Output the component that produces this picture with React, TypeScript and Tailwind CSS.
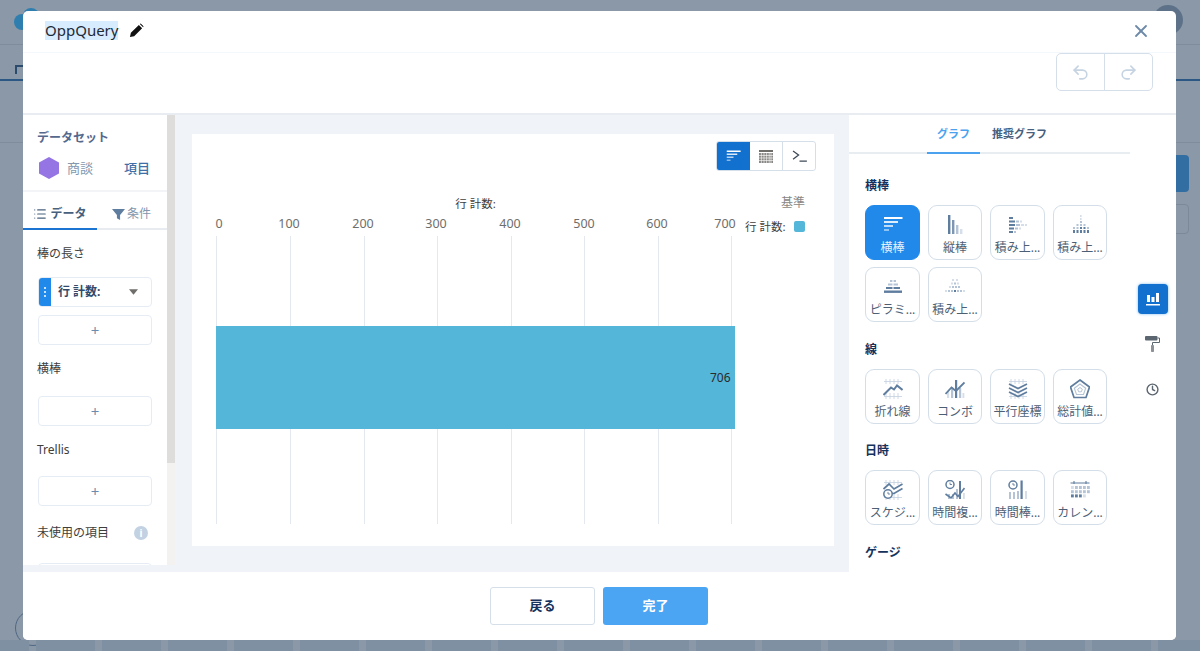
import React from 'react';
import { X, Undo2, Redo2, List, Clock } from 'lucide-react';

const SLATE = '#5f7d9e';
const LIGHT = '#b4c4d6';
const PALE = '#d5dee9';

const Dots = ({ rows }: { rows: [number, number, number, number, string][] }) => (
  <>
    {rows.map(([x, y, w, h, fill], i) => (
      <rect key={i} x={x} y={y} width={w} height={h} fill={fill} />
    ))}
  </>
);

const GridBg = () => (
  <path d="M3 0v5M7 0v5M11 0v5M15 0v5M1 2.5h18M3 14v6M7 14v6M11 14v6M15 14v6M1 17.5h18" stroke="#c3d0df" strokeWidth="0.8" fill="none" />
);

const ClockMark = ({ cx, cy, r }: { cx: number; cy: number; r: number }) => (
  <g>
    <circle cx={cx} cy={cy} r={r} fill="#fff" stroke={SLATE} strokeWidth="1.5" />
    <path d={`M${cx} ${cy - r * 0.5}V${cy}H${cx + r * 0.5}`} stroke={SLATE} strokeWidth="0.9" fill="none" />
  </g>
);

const HBarIcon = ({ color }: { color: string }) => (
  <>
    <rect x="1" y="2" width="18.5" height="2" fill={color} />
    <rect x="1" y="6" width="14" height="2" fill={color} opacity="0.85" />
    <rect x="1" y="10" width="9" height="2" fill={color} opacity="0.7" />
    <rect x="1" y="14" width="5" height="2" fill={color} opacity="0.5" />
  </>
);

const icons: Record<string, React.ReactNode> = {
  vbar: (
    <Dots rows={[[3, 0, 2.4, 19, SLATE], [7, 5, 2.4, 14, '#7d97b3'], [11, 10, 2.4, 9, LIGHT], [15, 14, 2.4, 5, PALE]]} />
  ),
  stackh: (
    <Dots
      rows={[
        [1, 2, 4, 2, SLATE], [1, 5.5, 6, 2, SLATE], [8, 5.5, 3, 2, LIGHT], [12, 5.5, 2, 2, PALE],
        [1, 9, 6, 2, SLATE], [8, 9, 4, 2, LIGHT], [13, 9, 3, 2, PALE], [17, 9, 2, 2, PALE],
        [1, 12.5, 5, 2, SLATE], [7, 12.5, 3, 2, LIGHT], [11, 12.5, 2, 2, PALE], [1, 16, 4, 2, SLATE], [6, 16, 2, 2, LIGHT],
      ]}
    />
  ),
  stackv: (
    <Dots
      rows={[
        [10, 0, 1.6, 2, PALE], [10, 3, 1.6, 2, PALE], [10, 6, 2, 2, LIGHT], [10, 9, 2, 2, LIGHT], [10, 12, 2, 2, SLATE], [10, 15, 2, 3, SLATE],
        [6.5, 9, 2, 2, LIGHT], [6.5, 12, 2, 2, LIGHT], [6.5, 15, 2, 3, SLATE], [3, 15, 2, 3, SLATE], [3, 12, 2, 2, LIGHT],
        [13.5, 9, 2, 2, LIGHT], [13.5, 12, 2, 2, SLATE], [13.5, 15, 2, 3, SLATE], [17, 12, 2, 2, LIGHT], [17, 15, 2, 3, SLATE],
      ]}
    />
  ),
  pyramid: (
    <Dots
      rows={[
        [7, 3, 2.4, 2, LIGHT], [10.6, 3, 2.4, 2, LIGHT], [5, 6.5, 4.5, 2, LIGHT], [10.5, 6.5, 4.5, 2, LIGHT],
        [3, 10, 6.5, 2, SLATE], [10.5, 10, 6.5, 2, SLATE], [1, 13.5, 18, 2.4, SLATE],
      ]}
    />
  ),
  stackp: (
    <Dots
      rows={[
        [7, 2, 2, 2, PALE], [11, 2, 2, 2, PALE],
        [6, 5.5, 2, 2, PALE], [9, 5.5, 2, 2, LIGHT], [12, 5.5, 2, 2, PALE],
        [4, 9, 2, 2, PALE], [7, 9, 2, 2, LIGHT], [10, 9, 2, 2, LIGHT], [13, 9, 2, 2, LIGHT],
        [0, 13, 2, 2, PALE], [3, 13, 2, 2, LIGHT], [6, 13, 2, 2, LIGHT], [9, 13, 2, 2, SLATE], [12, 13, 2, 2, LIGHT], [15, 13, 2, 2, LIGHT], [18, 13, 2, 2, PALE],
      ]}
    />
  ),
  line: (
    <>
      <GridBg />
      <path d="M0.5 16L8 8.5L11 10.5L14 6.5L19.5 11" stroke={SLATE} strokeWidth="2" fill="none" />
    </>
  ),
  combo: (
    <>
      <Dots rows={[[2, 12, 2.2, 7, PALE], [6, 8, 2.2, 11, LIGHT], [10, 1, 2.2, 18, SLATE], [14, 9, 2.2, 10, LIGHT], [17.5, 14, 1.8, 5, PALE]]} />
      <path d="M0.5 15L6.5 8.5L11 12L19.5 3.5" stroke={SLATE} strokeWidth="1.8" fill="none" />
    </>
  ),
  parallel: (
    <>
      <GridBg />
      <path d="M1 5L10 9.5L19 5M1 9L10 13.5L19 9M1 13L10 17.5L19 13" stroke={SLATE} strokeWidth="1.7" fill="none" />
    </>
  ),
  radar: (
    <>
      <path d="M10 1L19.5 8L16 18.5H4L0.5 8Z" fill="none" stroke={SLATE} strokeWidth="1.7" />
      <path d="M10 5L15.7 9.2L13.5 15.5H6.5L4.3 9.2Z" fill="none" stroke={LIGHT} strokeWidth="1.1" />
      <path d="M10 8.5L12.3 10.2L11.4 12.8H8.6L7.7 10.2Z" fill="none" stroke={LIGHT} strokeWidth="1" />
    </>
  ),
  schedule: (
    <>
      <GridBg />
      <path d="M0.5 9L6 4L11 9L19.5 4M5 13L11 13.5L19.5 8.5" stroke={SLATE} strokeWidth="1.7" fill="none" />
      <ClockMark cx={5} cy={14} r={4.2} />
    </>
  ),
  timecombo: (
    <>
      <Dots rows={[[3, 14, 2, 5, LIGHT], [7, 14, 2, 5, LIGHT], [11, 9, 2, 10, LIGHT], [14, 1, 2, 18, SLATE], [18, 13, 1.8, 6, PALE]]} />
      <path d="M0.5 14L6 18L10 13L13 16.5L19.5 8" stroke={SLATE} strokeWidth="1.6" fill="none" />
      <ClockMark cx={5} cy={4.5} r={4} />
    </>
  ),
  timebar: (
    <>
      <Dots rows={[[1, 12, 2, 7, LIGHT], [5, 12, 2, 7, LIGHT], [9, 11, 2, 8, LIGHT], [12.5, 0.5, 2.2, 18.5, SLATE], [17, 11, 2, 8, PALE]]} />
      <ClockMark cx={5} cy={5} r={4} />
    </>
  ),
  calendar: (
    <>
      <path d="M0.5 3h19M4 1v3M16 1v3" stroke={SLATE} strokeWidth="1.1" fill="none" />
      {[6, 10.2, 14.4].flatMap((y, r) =>
        [1, 5, 9, 13, 17].map((x, c) => (
          <rect
            key={`${r}-${c}`}
            x={x}
            y={y}
            width="2.8"
            height="3"
            fill={r === 2 && c < 3 ? SLATE : r === 2 && c === 3 ? PALE : r === 2 ? '#ffffff' : r === 0 && c === 0 ? PALE : LIGHT}
          />
        ))
      )}
    </>
  ),
};

type Tile = { label: string; icon: string };

const Section = ({ title, mt, tiles }: { title: string; mt: string; tiles: Tile[] }) => (
  <section className={mt}>
    <h3 className="text-[12px] leading-[16px] font-bold text-[#16325c]">{title}</h3>
    <div className="mt-[11px] grid grid-cols-[55px_54px_55px_54px] gap-x-[8px] gap-y-[7px]">
      {tiles.map((t, i) => (
        <ChartTile key={i} label={t.label} icon={t.icon} />
      ))}
    </div>
  </section>
);

const ChartTile = ({ label, icon }: Tile) => {
  const active = icon === 'hbar';
  return (
    <div
      className={`h-[55px] rounded-[9px] border-[1.5px] flex flex-col items-center pt-[9px] ${
        active ? 'bg-[#2189ea] border-[#2189ea] text-[#e6f2fd]' : 'bg-white border-[#d3dee9] text-[#4d5f75]'
      }`}
    >
      <svg viewBox="0 0 20 20" className="w-[20px] h-[20px]">
        {active ? <HBarIcon color="#ffffff" /> : icons[icon]}
      </svg>
      <span className="mt-[5px] text-[12px] leading-[15px] whitespace-nowrap">{label}</span>
    </div>
  );
};

const AddBox = () => (
  <div className="h-[30px] mt-[8px] rounded-[4px] border border-[#e6ecf4] flex items-center justify-center text-[#6d8cad] text-[15px] leading-none">
    +
  </div>
);

const Background = () => (
  <div className="absolute inset-0 bg-[#8b98a7] overflow-hidden">
    <svg className="absolute left-[13px] top-[7px] w-[30px] h-[24px]" viewBox="0 0 30 24">
      <circle cx="9" cy="15" r="8" fill="#2e7fb0" />
      <circle cx="18" cy="9" r="8" fill="#2e7fb0" />
    </svg>
    <div className="absolute left-[1153px] top-[5px] w-[30px] h-[30px] rounded-full bg-[#5d7189]" />
    <div className="absolute left-0 right-0 top-[44px] h-px bg-[#7f8c9b]" />
    <div className="absolute left-[15px] top-[65px] w-[8px] h-[9px] border-t-2 border-l-2 border-[#2a4a6e]" />
    <div className="absolute left-0 right-0 top-[79px] h-[2px] bg-[#2c5684]" />
    <div className="absolute left-0 right-0 top-[142px] h-px bg-[#7f8c9b]" />
    <div className="absolute left-[1150px] top-[155px] w-[39px] h-[37px] rounded-[4px] bg-[#336ea3]" />
    <div className="absolute left-[1150px] top-[204px] w-[39px] h-[30px] rounded-[4px] border border-[#7b8999]" />
    <div className="absolute left-[15px] top-[610px] w-[36px] h-[36px] rounded-full border border-[#4f6783]" />
    <div className="absolute left-[-30px] top-[640px] h-[11px] flex gap-[7px]">
      {Array.from({ length: 19 }).map((_, i) => (
        <div key={i} className="w-[59px] h-full bg-[#8090a3]" />
      ))}
    </div>
  </div>
);

const ChartSvg = () => {
  const grid = [216, 290, 364, 437, 511, 584, 658, 731];
  const ticks: [string, number][] = [['0', 219], ['100', 289], ['200', 363], ['300', 436], ['400', 510], ['500', 584], ['600', 657], ['700', 725]];
  return (
    <svg viewBox="192 171 642 375" className="w-[642px] h-[375px] block" fontFamily="'Noto Sans','Noto Sans CJK JP',sans-serif">
      {grid.map(x => (
        <line key={x} x1={x + 0.5} x2={x + 0.5} y1="236" y2="524" stroke="#e4e9ef" />
      ))}
      <rect x="216" y="326" width="519" height="103" fill="#54b6d8" />
      <text x="475.5" y="208" textAnchor="middle" fontSize="11.5" fill="#3e3e3c">行 計数:</text>
      {ticks.map(([t, x]) => (
        <text key={t} x={x} y="228" textAnchor="middle" fontSize="12.5" fill="#706e6b">{t}</text>
      ))}
      <text x="730.5" y="382" textAnchor="end" fontSize="12" fill="#2b2b2b">706</text>
      <text x="805" y="207" textAnchor="end" fontSize="12" fill="#8a8886">基準</text>
      <text x="745" y="231" fontSize="11.5" fill="#3e3e3c">行 計数:</text>
      <rect x="794" y="221" width="11" height="11" rx="2" fill="#54b6d8" />
    </svg>
  );
};

const charts: Tile[] = [
  { label: '横棒', icon: 'hbar' },
  { label: '縦棒', icon: 'vbar' },
  { label: '積み上...', icon: 'stackh' },
  { label: '積み上...', icon: 'stackv' },
  { label: 'ピラミ...', icon: 'pyramid' },
  { label: '積み上...', icon: 'stackp' },
];
const lines: Tile[] = [
  { label: '折れ線', icon: 'line' },
  { label: 'コンボ', icon: 'combo' },
  { label: '平行座標', icon: 'parallel' },
  { label: '総計値...', icon: 'radar' },
];
const dates: Tile[] = [
  { label: 'スケジ...', icon: 'schedule' },
  { label: '時間複...', icon: 'timecombo' },
  { label: '時間棒...', icon: 'timebar' },
  { label: 'カレン...', icon: 'calendar' },
];

export default function App() {
  return (
    <div
      className="relative w-[1200px] h-[651px] overflow-hidden"
      style={{ fontFamily: "'Noto Sans','Noto Sans CJK JP',sans-serif" }}
    >
      <Background />
      <div className="relative ml-[23px] mt-[11px] inline-flex flex-col align-top w-[1153px] h-[629px] bg-white rounded-[5px] overflow-hidden">
        {/* title */}
        <div className="h-[42px] shrink-0 flex items-center pl-[22px] pr-[25px] pb-[2px] border-b border-[#f4f8fc]">
          <span className="bg-[#d8ecff] text-[15px] leading-[19px] text-[#1f2a37]">OppQuery</span>
          <svg viewBox="0 0 16 16" className="ml-[11px] w-[15px] h-[15px]">
            <path d="M1 15l1-4.5L10.5 2 14 5.5 5.5 14zM11.5 1l1-.5 3 3-.5 1z" fill="#111" />
          </svg>
          <X className="ml-auto w-[20px] h-[20px] text-[#6d8aa8]" strokeWidth={2.2} />
        </div>

        {/* toolbar */}
        <div className="h-[62px] shrink-0 flex justify-end pr-[23px] border-b-2 border-[#e9edf2]">
          <div className="flex h-[38px] rounded-[5px] border border-[#d5dfea]">
            <div className="w-[48px] flex items-center justify-center border-r border-[#d5dfea]">
              <Undo2 className="w-[19px] h-[19px] text-[#c5d3e2]" strokeWidth={2} />
            </div>
            <div className="w-[47px] flex items-center justify-center">
              <Redo2 className="w-[19px] h-[19px] text-[#c5d3e2]" strokeWidth={2} />
            </div>
          </div>
        </div>

        {/* body */}
        <div className="flex-1 flex min-h-0">
          {/* left column */}
          <div className="w-[152px] shrink-0 flex flex-col bg-[#f0f4f9]">
            <div className="h-[450px] flex bg-white overflow-hidden">
              <div className="w-[144px] shrink-0 overflow-hidden">
                <div className="h-[77px] border-b-2 border-[#f2f4f7] px-[14px] pt-[14px]">
                  <div className="text-[12px] leading-[17px] font-bold text-[#54698d]">データセット</div>
                  <div className="mt-[11px] flex items-center">
                    <svg viewBox="0 0 20 22" className="ml-[2px] w-[20px] h-[22px]">
                      <path d="M10 0L20 5.5V16.5L10 22L0 16.5V5.5Z" fill="#9575e3" />
                    </svg>
                    <span className="ml-[8px] text-[13px] leading-[18px] text-[#8598ae]">商談</span>
                    <span className="ml-auto mr-[3px] text-[13px] leading-[18px] font-medium text-[#3f6fa6]">項目</span>
                  </div>
                </div>
                <div className="h-[38px] flex border-b-2 border-[#e8ecf1]">
                  <div className="relative w-[74px] flex items-center justify-center pt-[8px] text-[12px] font-bold text-[#47607d]">
                    <List className="w-[14px] h-[14px] mr-[3px]" strokeWidth={2} />
                    データ
                    <div className="absolute left-0 right-0 -bottom-[2px] h-[2px] bg-[#1b74d1]" />
                  </div>
                  <div className="flex items-center pl-[15px] pt-[8px] text-[12px] text-[#8296ad]">
                    <svg viewBox="0 0 14 14" className="w-[13px] h-[13px] mr-[2px]">
                      <path d="M0 1h14L8.7 7.5V13L5.3 11V7.5Z" fill="#5f7d9e" />
                    </svg>
                    条件
                  </div>
                </div>
                <div className="px-[15px]">
                  <div className="mt-[15px] -ml-px text-[12px] leading-[17px] text-[#3e3e3c]">棒の長さ</div>
                  <div className="mt-[15px] h-[30px] rounded-[4px] border border-[#e6ecf4] flex items-center overflow-hidden">
                    <div className="w-[12px] h-full bg-[#2189ea] flex flex-col items-center justify-center gap-[2px]">
                      <i className="w-[2px] h-[2px] bg-white rounded-full" />
                      <i className="w-[2px] h-[2px] bg-white rounded-full" />
                      <i className="w-[2px] h-[2px] bg-white rounded-full" />
                    </div>
                    <span className="ml-[7px] text-[12px] font-bold text-[#2f4a6b]">行 計数:</span>
                    <svg viewBox="0 0 10 6" className="ml-auto mr-[13px] w-[9px] h-[6px]">
                      <path d="M0 0h10L5 6Z" fill="#706e6b" />
                    </svg>
                  </div>
                  <AddBox />
                  <div className="mt-[15px] -ml-px text-[12px] leading-[17px] text-[#3e3e3c]">横棒</div>
                  <div className="mt-[19px]"><AddBox /></div>
                  <div className="mt-[15px] -ml-px text-[12px] leading-[17px] text-[#3e3e3c]">Trellis</div>
                  <div className="mt-[18px]"><AddBox /></div>
                  <div className="mt-[18px] -ml-px flex items-center text-[12px] leading-[17px] text-[#3e3e3c]">
                    未使用の項目
                    <span className="ml-auto mr-[4px] w-[14px] h-[14px] rounded-full bg-[#c3d2e3] text-white text-[10px] leading-[14px] font-bold text-center">i</span>
                  </div>
                  <div className="mt-[22px] h-[30px] rounded-[4px] border border-[#e6ecf4]" />
                </div>
              </div>
              <div className="w-[8px] shrink-0 bg-[#f3f2f1]">
                <div className="h-[348px] bg-[#dfdddb]" />
              </div>
            </div>
          </div>

          {/* centre */}
          <div className="flex-1 bg-[#f0f4f9] pl-[17px] pr-[15px] pt-[19px]">
            <div className="h-[412px] bg-white">
              <div className="h-[37px] flex justify-end items-start pt-[7px] pr-[18px]">
                <div className="flex h-[30px] rounded-[3px] border border-[#d5dfea] overflow-hidden">
                  <div className="w-[33px] bg-[#1270cf] flex items-center justify-center -my-px">
                    <svg viewBox="0 0 20 20" className="w-[15px] h-[15px]"><HBarIcon color="#ffffff" /></svg>
                  </div>
                  <div className="w-[33px] border-r border-[#d5dfea] flex items-center justify-center">
                    <svg viewBox="0 0 14 13" className="w-[14px] h-[13px]">
                      <rect width="14" height="2" fill="#706e6b" />
                      <path d="M0 3h14v10H0z" fill="#8a8886" />
                      <path d="M2.4 2v11M5 2v11M7.6 2v11M10.2 2v11M12 2v11M0 5.5h14M0 8h14M0 10.5h14" stroke="#fff" strokeWidth="0.6" />
                    </svg>
                  </div>
                  <div className="w-[32px] flex items-center justify-center">
                    <svg viewBox="0 0 16 13" className="w-[15px] h-[12px]">
                      <path d="M1 1l6 4.5L1 10M8 12h8" stroke="#3e4a57" strokeWidth="1.4" fill="none" />
                    </svg>
                  </div>
                </div>
              </div>
              <ChartSvg />
            </div>
          </div>

          {/* right */}
          <div className="w-[327px] shrink-0 flex bg-white">
            <div className="w-[281px] shrink-0">
              <div className="h-[39px] border-b-2 border-[#e8edf2] flex pl-[78px]">
                <div className="relative w-[53px] flex items-center justify-center pt-[2px] text-[11px] font-bold text-[#4ba3f0]">
                  グラフ
                  <div className="absolute left-0 right-0 -bottom-[2px] h-[2px] bg-[#4ba3f0]" />
                </div>
                <div className="ml-[12px] flex items-center pt-[2px] text-[11px] font-bold text-[#47607d]">推奨グラフ</div>
              </div>
              <div className="pl-[16px]">
                <Section title="横棒" mt="mt-[24px]" tiles={charts} />
                <Section title="線" mt="mt-[20px]" tiles={lines} />
                <Section title="日時" mt="mt-[19px]" tiles={dates} />
                <h3 className="mt-[20px] text-[12px] leading-[16px] font-bold text-[#16325c]">ゲージ</h3>
              </div>
            </div>
            <div className="flex-1 flex flex-col items-center pt-[169px] pl-[7px] pr-[8px]">
              <div className="w-[30px] h-[30px] rounded-[4px] bg-[#1270cf] flex items-center justify-center shadow-[0_0_3px_#7db8ee]">
                <svg viewBox="0 0 14 14" className="w-[14px] h-[14px]">
                  <path d="M1 3h3v7H1zM5.5 5h3v5h-3zM10 1h3v9h-3zM0 12h14v1.4H0z" fill="#fff" />
                </svg>
              </div>
              <svg viewBox="0 0 15 17" className="mt-[21px] w-[15px] h-[17px]">
                <rect x="0" y="1" width="12.5" height="4.5" rx="1" fill="#5c6670" />
                <path d="M12.5 3H14.5V7.5H7.5V10" stroke="#5c6670" strokeWidth="1" fill="none" />
                <rect x="6" y="10" width="3" height="7" rx="0.8" fill="#8b9196" />
              </svg>
              <Clock className="mt-[31px] w-[13px] h-[13px] text-[#5c6670]" strokeWidth={2.6} />
            </div>
          </div>
        </div>

        {/* footer */}
        <div className="h-[68px] shrink-0 bg-white flex justify-center items-start pt-[15px] gap-[8px] pr-[1px]">
          <div className="w-[105px] h-[38px] rounded-[3px] border border-[#d5dfea] flex items-center justify-center text-[13px] font-bold text-[#16325c]">
            戻る
          </div>
          <div className="w-[105px] h-[38px] rounded-[3px] bg-[#4ba5f3] flex items-center justify-center text-[13px] font-bold text-white">
            完了
          </div>
        </div>
      </div>
    </div>
  );
}
